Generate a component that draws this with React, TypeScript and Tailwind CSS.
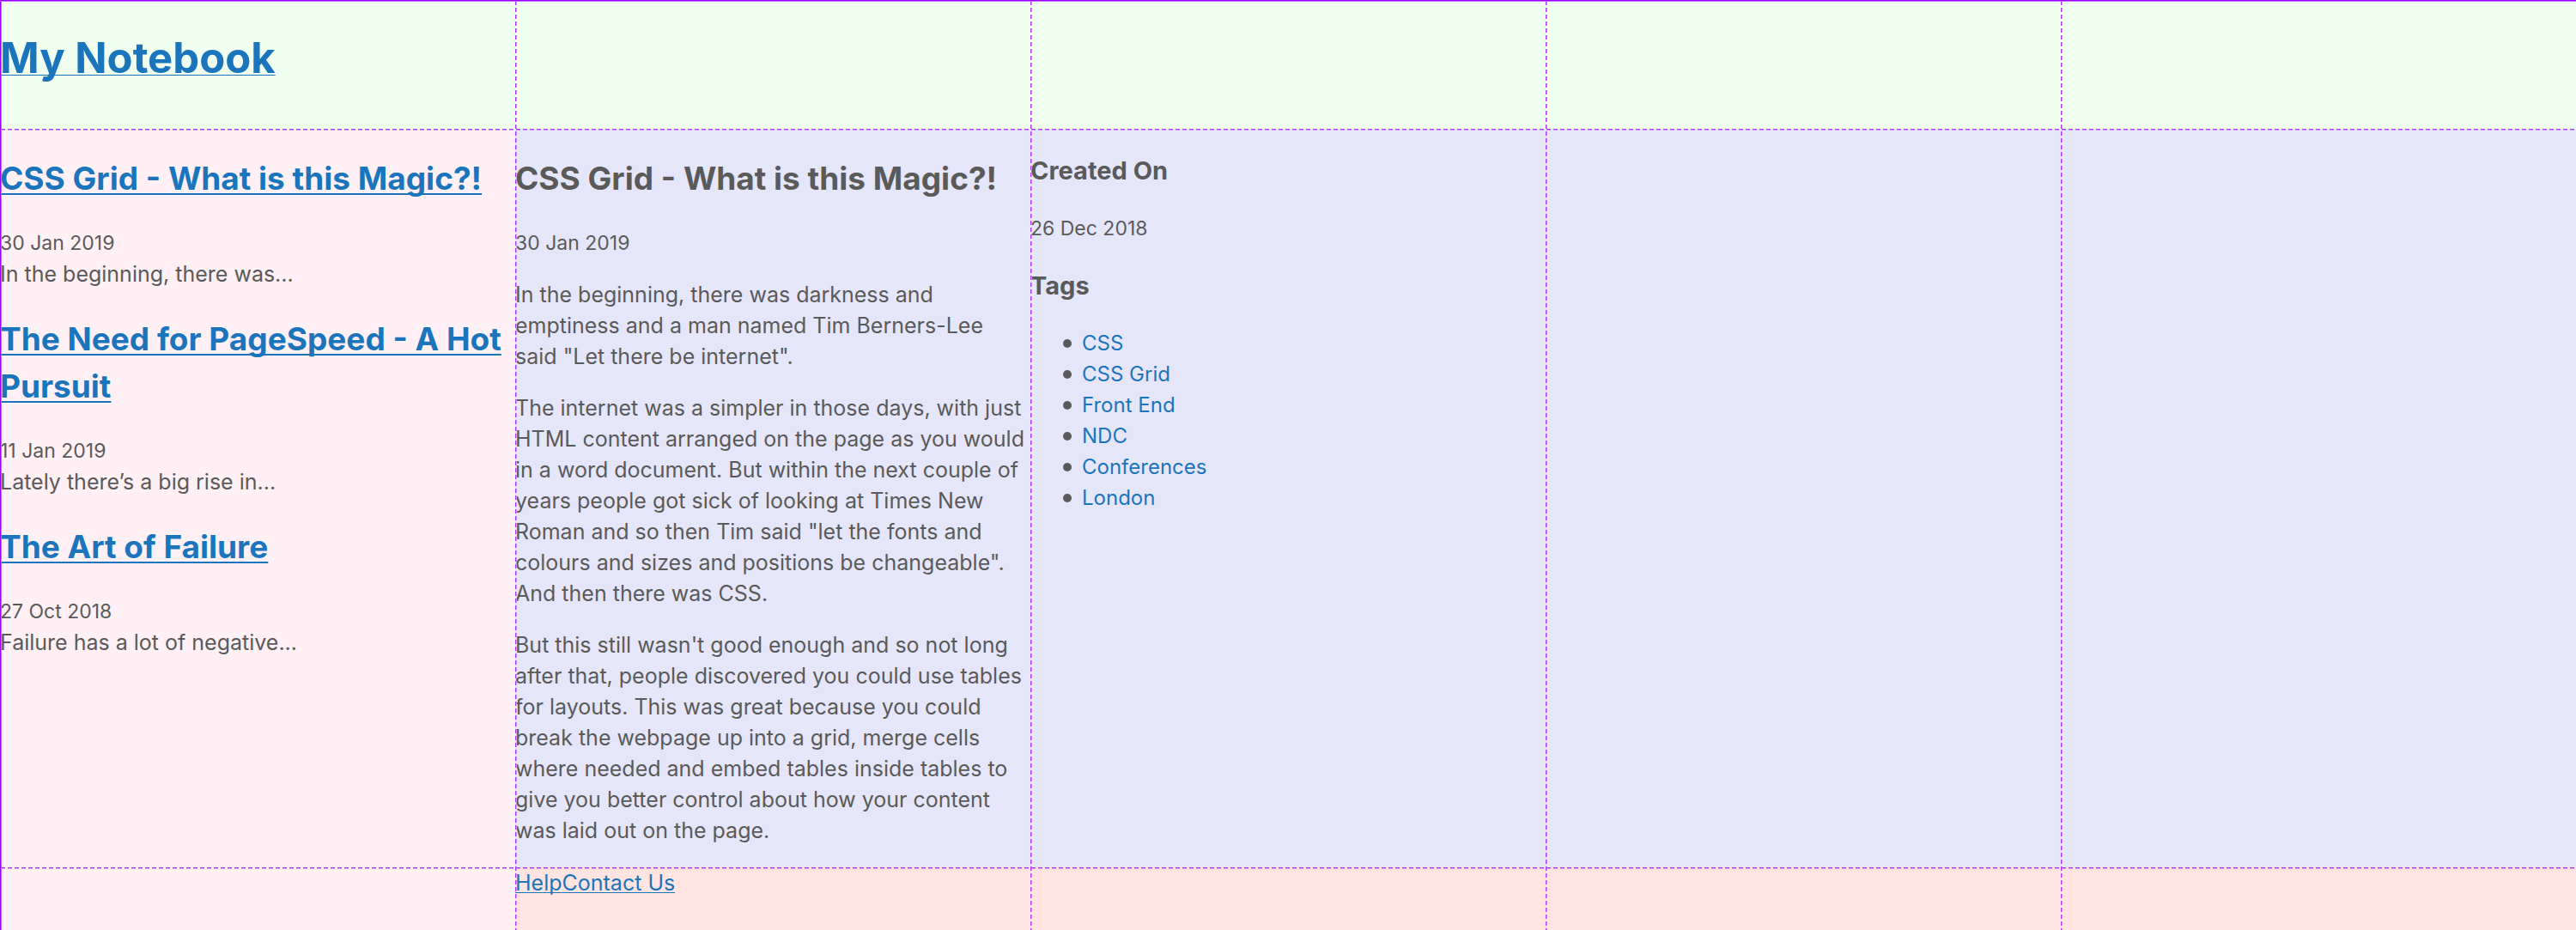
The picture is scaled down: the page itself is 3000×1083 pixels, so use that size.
import React from "react";

const posts = [
  { title: "CSS Grid - What is this Magic?!", date: "30 Jan 2019", excerpt: "In the beginning, there was..." },
  { title: "The Need for PageSpeed - A Hot Pursuit", date: "11 Jan 2019", excerpt: "Lately there’s a big rise in..." },
  { title: "The Art of Failure", date: "27 Oct 2018", excerpt: "Failure has a lot of negative..." },
];

const paragraphs = [
  ["In the beginning, there was darkness and", "emptiness and a man named Tim Berners-Lee", 'said "Let there be internet".'],
  [
    "The internet was a simpler in those days, with just",
    "HTML content arranged on the page as you would",
    "in a word document. But within the next couple of",
    "years people got sick of looking at Times New",
    'Roman and so then Tim said "let the fonts and',
    'colours and sizes and positions be changeable".',
    "And then there was CSS.",
  ],
  [
    "But this still wasn't good enough and so not long",
    "after that, people discovered you could use tables",
    "for layouts. This was great because you could",
    "break the webpage up into a grid, merge cells",
    "where needed and embed tables inside tables to",
    "give you better control about how your content",
    "was laid out on the page.",
  ],
];

const tags = ["CSS", "CSS Grid", "Front End", "NDC", "Conferences", "London"];

const link = "text-[#1b75bc] underline decoration-1 underline-offset-[2px] [text-decoration-skip-ink:none]";

const dashedRow =
  "h-[2px] bg-[linear-gradient(to_bottom,#ad33ff_50%,#d699ff_50%)] [mask-image:repeating-linear-gradient(to_right,transparent_0_1px,black_1px_6px,transparent_6px_8px)]";
const dashedColumn =
  "w-[2px] bg-[linear-gradient(to_right,#ad33ff_50%,#d699ff_50%)] [mask-image:repeating-linear-gradient(to_bottom,transparent_0_1px,black_1px_6px,transparent_6px_8px)]";

function GridLines() {
  return (
    <div aria-hidden="true" className="pointer-events-none absolute inset-0 overflow-hidden">
      <div className="absolute inset-0 grid grid-cols-5">
        <div className="w-[2px] bg-[linear-gradient(to_right,#9900ff_50%,#c06aff_50%)]" />
        <div className={dashedColumn} />
        <div className={dashedColumn} />
        <div className={dashedColumn} />
        <div className={dashedColumn} />
      </div>
      <div className="absolute inset-0 grid grid-rows-[150px_1fr_73px]">
        <div className="h-[2px] bg-[linear-gradient(to_bottom,#9900ff_50%,#c06aff_50%)]" />
        <div className={dashedRow} />
        <div className={dashedRow} />
      </div>
    </div>
  );
}

export default function App() {
  return (
    <div className="relative grid min-h-screen grid-cols-5 grid-rows-[150px_1fr_73px] font-['Inter',sans-serif] text-[25px] leading-[36px] text-[#5a5a5a]">
      <header className="col-span-5 bg-[#f0fff0] pt-8">
        <h1 className="text-[49px] leading-[72px] font-bold">
          <a href="#" className={link}>My Notebook</a>
        </h1>
      </header>

      <nav className="row-span-2 bg-[#fff0f5]">
        {posts.map((post) => (
          <section key={post.title} className="pt-[30px]">
            <h2 className="mb-[30px] text-[37px] leading-[55px] font-bold">
              <a href="#" className="text-[#1b75bc] underline decoration-2 underline-offset-[4px] [text-decoration-skip-ink:none]">{post.title}</a>
            </h2>
            <p className="text-[23px]">{post.date}</p>
            <p>{post.excerpt}</p>
          </section>
        ))}
      </nav>

      <main className="col-span-4 grid grid-cols-4 bg-[#e6e6fa]">
        <article className="pt-[30px]">
          <h2 className="mb-[30px] text-[37px] leading-[55px] font-bold whitespace-nowrap">CSS Grid - What is this Magic?!</h2>
          <p className="text-[23px]">30 Jan 2019</p>
          {paragraphs.map((lines) => (
            <p key={lines[0]} className="mt-6 whitespace-nowrap">
              {lines.map((line) => (
                <React.Fragment key={line}>
                  {line}
                  <br />
                </React.Fragment>
              ))}
            </p>
          ))}
        </article>
        <aside className="pt-7">
          <h3 className="mb-7 text-[29px] leading-[42px] font-bold">Created On</h3>
          <p className="mb-7 text-[23px]">26 Dec 2018</p>
          <h3 className="mb-7 text-[29px] leading-[42px] font-bold">Tags</h3>
          <ul className="pl-[38px]">
            {tags.map((tag) => (
              <li key={tag} className="flex items-center gap-3 text-[24px] before:size-[10px] before:rounded-full before:bg-[#5a5a5a]">
                <a href="#" className="text-[#1b75bc]">{tag}</a>
              </li>
            ))}
          </ul>
        </aside>
      </main>

      <footer className="col-span-4 bg-[#ffe4e1]">
        <a href="#" className={link}>Help</a>
        <a href="#" className={link}>Contact Us</a>
      </footer>
      <GridLines />
    </div>
  );
}
